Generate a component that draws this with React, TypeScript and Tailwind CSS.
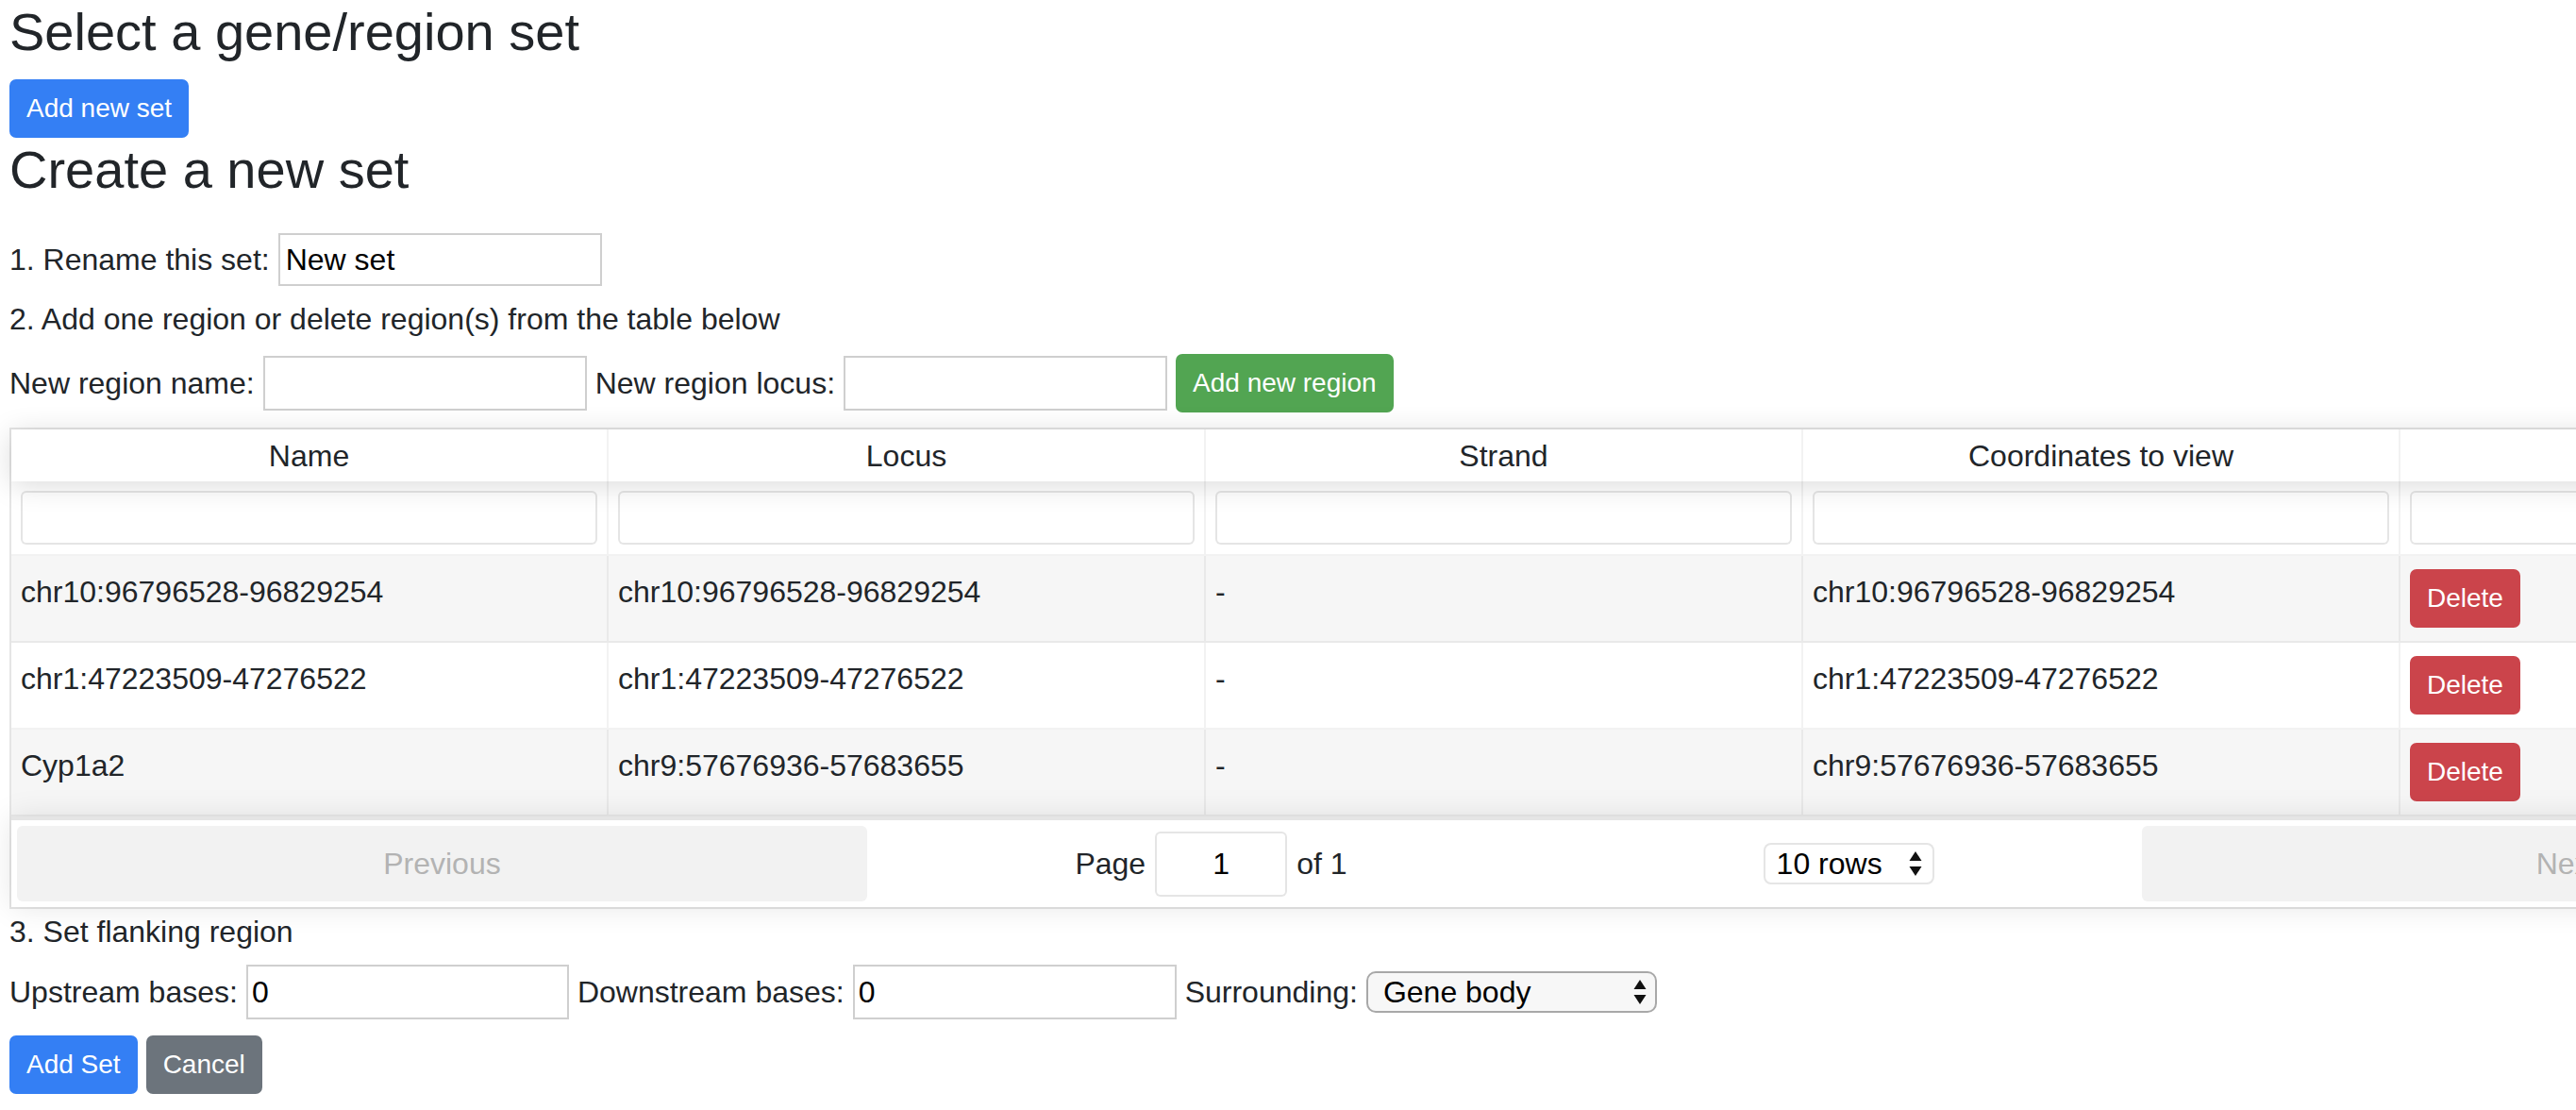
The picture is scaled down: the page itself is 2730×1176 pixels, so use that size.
import React from "react";

const Arrows = ({ size = 1 }: { size?: number }) => (
  <svg width={16 * size} height={30 * size} viewBox="0 0 16 30">
    <path d="M8 2 L14.5 12 L1.5 12 Z" fill="#111" />
    <path d="M1.5 18 L14.5 18 L8 28 Z" fill="#111" />
  </svg>
);

const rows: string[][] = [
  ["chr10:96796528-96829254", "chr10:96796528-96829254", "-", "chr10:96796528-96829254"],
  ["chr1:47223509-47276522", "chr1:47223509-47276522", "-", "chr1:47223509-47276522"],
  ["Cyp1a2", "chr9:57676936-57683655", "-", "chr9:57676936-57683655"],
];

const headers = ["Name", "Locus", "Strand", "Coordinates to view", ""];

export default function App() {
  return (
    <div
      className="w-[2730px] min-h-[1176px] overflow-hidden bg-white px-[10px] text-[32px] leading-[48px] text-[#212529] flex flex-col items-start"
      style={{ fontFamily: '"Liberation Sans", Arial, Helvetica, sans-serif' }}
    >
      <h3 className="text-[56px] leading-[68px] font-normal mb-[16px]">Select a gene/region set</h3>
      <div className="flex">
        <button className="h-[62px] px-[16px] rounded-[7px] bg-[#347ff4] border-2 border-[#347ff4] text-white text-[28px] leading-[42px]">
          Add new set
        </button>
      </div>
      <h3 className="text-[56px] leading-[68px] font-normal mb-[16px]">Create a new set</h3>

      <div className="mt-[17px] flex items-center h-[56px] gap-[9px]">
        <span>1. Rename this set:</span>
        <div className="w-[343px] h-[56px] border-2 border-[#cfcfcf] flex items-center pl-[6px] text-black">New set</div>
      </div>

      <div className="mt-[11px]">2. Add one region or delete region(s) from the table below</div>

      <div className="mt-[13px] flex items-center h-[62px] gap-[9px]">
        <span>New region name:</span>
        <div className="w-[343px] h-[58px] border-2 border-[#cfcfcf]" />
        <span>New region locus:</span>
        <div className="w-[343px] h-[58px] border-2 border-[#cfcfcf]" />
        <button className="h-[62px] px-[16px] rounded-[7px] bg-[#52a552] border-2 border-[#52a552] text-white text-[28px] leading-[42px]">
          Add new region
        </button>
      </div>

      <div className="mt-[16px] w-[3169px] shrink-0 border-2 border-black/10 flex flex-col">
        {/* header */}
        <div className="relative z-20 grid grid-cols-[repeat(5,633px)] bg-white shadow-[0_4px_30px_0_rgba(0,0,0,0.15)]">
          {headers.map((h, i) => (
            <div key={i} className="h-[55px] flex items-center justify-center border-r-2 border-black/5">
              {h}
            </div>
          ))}
        </div>
        {/* filters */}
        <div className="relative z-10 grid grid-cols-[repeat(5,633px)] bg-white border-b-2 border-black/5">
          {headers.map((_, i) => (
            <div key={i} className="p-[10px] border-r-2 border-black/5">
              <div className="w-full h-[57px] border-2 border-black/10 rounded-[6px] bg-white" />
            </div>
          ))}
        </div>
        {/* rows */}
        {rows.map((r, ri) => (
          <div
            key={ri}
            className={
              ri % 2 === 0
                ? "grid grid-cols-[repeat(5,633px)] bg-[#f6f6f6] border-b-2 border-black/5"
                : "grid grid-cols-[repeat(5,633px)] bg-white border-b-2 border-black/5"
            }
          >
            {r.map((c, ci) => (
              <div key={ci} className="px-[10px] py-[14px] border-r-2 border-black/5 leading-[48px]">
                {c}
              </div>
            ))}
            <div className="px-[10px] py-[14px] border-r-2 border-black/5">
              <button className="h-[62px] px-[16px] rounded-[7px] bg-[#cb444b] border-2 border-[#cb444b] text-white text-[28px] leading-[42px]">
                Delete
              </button>
            </div>
          </div>
        ))}
        {/* pagination */}
        <div className="relative z-10 flex p-[6px] bg-white border-t-4 border-black/10 shadow-[0_0_30px_0_rgba(0,0,0,0.1)]">
          <div className="flex-[1] h-[80px] rounded-[6px] bg-[#f2f2f2] text-[#b3b3b3] flex items-center justify-center">
            Previous
          </div>
          <div className="flex-[1.5] flex items-center justify-around">
            <div className="flex items-center gap-[10px] mx-[20px]">
              <span>Page</span>
              <div className="w-[140px] h-[69px] border-2 border-black/10 rounded-[6px] bg-white flex items-center justify-center text-black">
                1
              </div>
              <span>of 1</span>
            </div>
            <div className="mx-[20px] w-[181px] h-[44px] border-2 border-black/10 rounded-[8px] bg-white flex items-center justify-between pl-[12px] pr-[10px] text-black">
              <span>10 rows</span>
              <Arrows />
            </div>
          </div>
          <div className="flex-[1] h-[80px] rounded-[6px] bg-[#f2f2f2] text-[#b3b3b3] flex items-center justify-center">
            Next
          </div>
        </div>
      </div>

      <div>3. Set flanking region</div>

      <div className="mt-[11px] flex items-center h-[58px] gap-[9px]">
        <span>Upstream bases:</span>
        <div className="w-[342px] h-[58px] border-2 border-[#cfcfcf] flex items-center pl-[4px] text-black">0</div>
        <span>Downstream bases:</span>
        <div className="w-[343px] h-[58px] border-2 border-[#cfcfcf] flex items-center pl-[4px] text-black">0</div>
        <span>Surrounding:</span>
        <div className="w-[308px] h-[44px] border-2 border-[#a8a8a8] rounded-[10px] bg-[#f7f7f7] flex items-center justify-between pl-[16px] pr-[8px] text-black">
          <span>Gene body</span>
          <Arrows />
        </div>
      </div>

      <div className="mt-[17px] flex gap-[9px]">
        <button className="h-[62px] px-[16px] rounded-[7px] bg-[#347ff4] border-2 border-[#347ff4] text-white text-[28px] leading-[42px]">
          Add Set
        </button>
        <button className="h-[62px] px-[16px] rounded-[7px] bg-[#6c747c] border-2 border-[#6c747c] text-white text-[28px] leading-[42px]">
          Cancel
        </button>
      </div>
    </div>
  );
}
